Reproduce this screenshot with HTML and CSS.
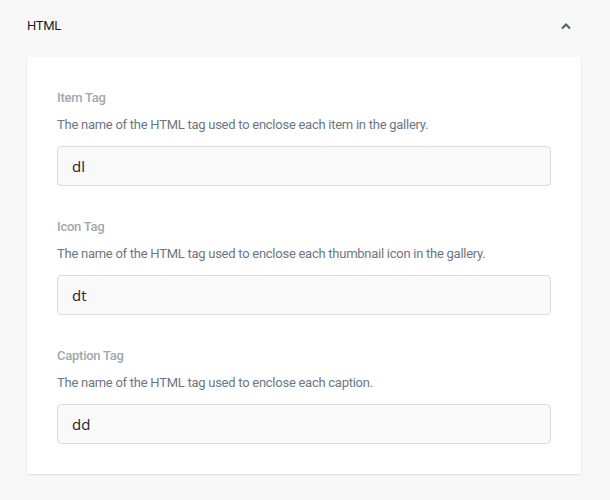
FILE: index.html
```html
<!DOCTYPE html>
<html>
<head>
<meta charset="utf-8">
<link rel="stylesheet" href="styles.css">
</head>
<body>
<div class="panel">
  <div class="panel-header">
    <span class="panel-title">HTML</span>
    <svg class="chevron" width="12" height="8" viewBox="0 0 12 8"><path d="M2 6.5 L6 2.5 L10 6.5" fill="none" stroke="#555d66" stroke-width="2"/></svg>
  </div>
  <div class="card">
    <div class="field">
      <div class="label">Item Tag</div>
      <div class="help">The name of the HTML tag used to enclose each item in the gallery.</div>
      <div class="input">dl</div>
    </div>
    <div class="field">
      <div class="label">Icon Tag</div>
      <div class="help">The name of the HTML tag used to enclose each thumbnail icon in the gallery.</div>
      <div class="input">dt</div>
    </div>
    <div class="field">
      <div class="label">Caption Tag</div>
      <div class="help">The name of the HTML tag used to enclose each caption.</div>
      <div class="input">dd</div>
    </div>
  </div>
</div>
</body>
</html>
```
FILE: styles.css
```css
html, body {
  margin: 0;
  padding: 0;
  background: #f8f8f8;
  font-family: Roboto, "Liberation Sans", sans-serif;
}
.panel {
  width: 610px;
  height: 500px;
}
.panel-header {
  display: flex;
  align-items: center;
  justify-content: space-between;
  padding: 18px 38px 18px 27px;
  height: 16px;
}
.panel-title {
  font-size: 13px;
  line-height: 16px;
  letter-spacing: -0.3px;
  color: #191e23;
}
.chevron {
  display: block;
}
.card {
  margin: 5px 29px 0 27px;
  background: #fff;
  border-radius: 3px;
  box-shadow: 0 1px 2px rgba(0, 0, 0, 0.12);
  padding: 33px 30px 30px 30px;
  display: flex;
  flex-direction: column;
  gap: 33px;
}
.field {
  display: flex;
  flex-direction: column;
}
.label {
  font-size: 13px;
  line-height: 16px;
  font-weight: 500;
  letter-spacing: -0.25px;
  color: #a2a7ac;
  margin-bottom: 10px;
}
.help {
  font-size: 13px;
  line-height: 18px;
  letter-spacing: -0.26px;
  color: #6c7781;
  margin-bottom: 12px;
}
.input {
  box-sizing: border-box;
  height: 40px;
  border: 1px solid #dcdcde;
  border-radius: 4px;
  background: #f9f9f9;
  padding: 0 14px;
  display: flex;
  align-items: center;
  font-family: "Open Sans", "Noto Sans", sans-serif;
  font-size: 15px;
  color: #1e2327;
}
```
